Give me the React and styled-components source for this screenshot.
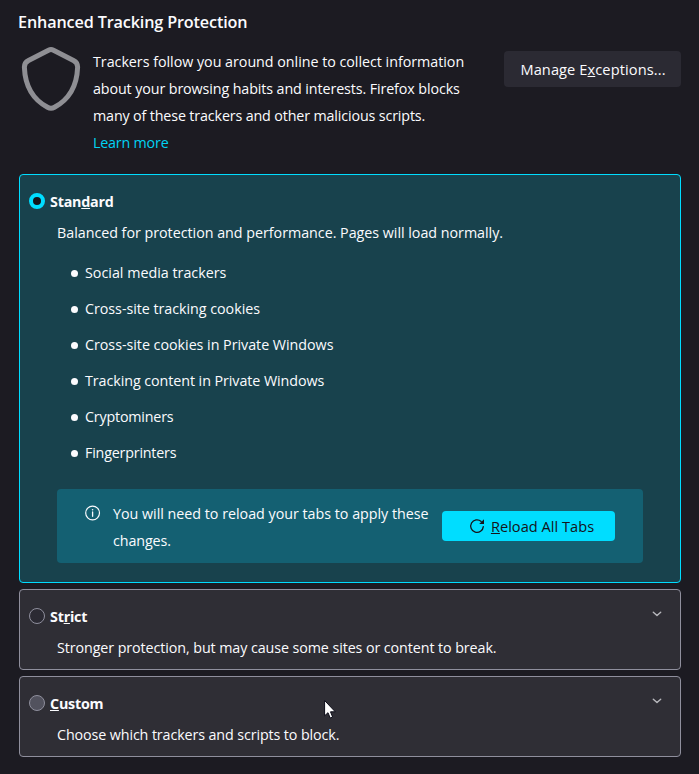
import React from "react";
import styled, { createGlobalStyle } from "styled-components";

const Global = createGlobalStyle`
  *, *::before, *::after { box-sizing: border-box; }
  body {
    margin: 0;
    background: #1c1b22;
    color: #fbfbfe;
    font: 400 14.3px/27px "Open Sans", "Segoe UI", sans-serif;
    overflow: hidden;
  }
`;

const Page = styled.main`
  position: relative;
  width: 699px;
  height: 774px;
  padding: 9px 18px 0 19px;
`;

const Heading = styled.h1`
  margin: 0 0 0 -1px;
  font-size: 16.2px;
  font-weight: 600;
  line-height: 27px;
  letter-spacing: -0.14px;
`;

const Intro = styled.section`
  display: flex;
  align-items: flex-start;
  height: 138px;
  padding-top: 12px;
`;

const Shield = styled.svg`
  flex: none;
  width: 64px;
  height: 66px;
  margin: -2px 10px 0 0;
`;

const IntroText = styled.div`
  flex: 1;
`;

const Line = styled.span`
  display: block;
  white-space: nowrap;
  letter-spacing: ${(p) => p.$track || 0}px;
`;

const Link = styled.a`
  color: #00ddff;
  letter-spacing: -0.2px;
  text-decoration: none;
  opacity: 0.95;
`;

const Key = styled.span`
  text-decoration: underline;
  text-decoration-thickness: 1px;
  text-underline-offset: 1px;
  text-decoration-skip-ink: none;
`;

const Button = styled.button`
  display: flex;
  align-items: center;
  justify-content: center;
  flex: none;
  border: 0;
  border-radius: 4px;
  padding: 0;
  font: 500 14.6px/27px "Open Sans", "Segoe UI", sans-serif;
  white-space: nowrap;
`;

const ManageButton = styled(Button)`
  width: 177px;
  height: 36px;
  margin-top: 3px;
  padding-left: 1px;
  background: #2b2a33;
  color: #fbfbfe;
  letter-spacing: 0.1px;
`;

const ReloadButton = styled(Button)`
  width: 173px;
  height: 30px;
  margin-top: 22px;
  gap: 6px;
  padding-left: 6px;
  background: #00ddff;
  color: #15141a;
  letter-spacing: 0.02px;
`;

const Options = styled.div`
  display: flex;
  flex-direction: column;
  gap: 6px;
`;

const Card = styled.section`
  display: flex;
  flex-direction: column;
  height: ${(p) => (p.$selected ? 409 : 81)}px;
  padding: 13px 19px 0 9px;
  border: 1px solid ${(p) => (p.$selected ? "#00ddff" : "#8f8f9d")};
  border-radius: 4px;
  background: ${(p) => (p.$selected ? "#18424d" : "#2f2e35")};
`;

const CardHeader = styled.div`
  display: flex;
  align-items: center;
  height: 27px;
`;

const Radio = styled.span`
  flex: none;
  width: 16px;
  height: 16px;
  margin: 0 5px 1px 0;
  border-radius: 50%;
  border: ${(p) => (p.$checked ? "4px solid #00ddff" : "1px solid #8f8f9d")};
  background: ${(p) => (p.$checked ? "#15141a" : p.$hover ? "#52525e" : "#2b2a33")};
`;

const CardTitle = styled.h2`
  flex: 1;
  margin: 0;
  font-size: 14.3px;
  font-weight: 700;
  line-height: 27px;
  letter-spacing: -0.22px;
`;

const Chevron = styled.svg`
  width: 10px;
  height: 6px;
  margin: -6px -1px 0 0;
`;

const Description = styled.p`
  margin: 4px 0 0 28px;
  white-space: nowrap;
  letter-spacing: ${(p) => p.$track || 0}px;
`;

const TrackerList = styled.ul`
  display: flex;
  flex-direction: column;
  gap: 9px;
  margin: 13px 0 23px 42px;
  padding: 0;
  list-style: none;
`;

const Tracker = styled.li`
  display: flex;
  align-items: center;
  gap: 7px;
  height: 27px;
  letter-spacing: ${(p) => p.$track || 0}px;

  &::before {
    content: "";
    width: 7px;
    height: 7px;
    margin-top: 1px;
    border-radius: 50%;
    background: #fbfbfe;
  }
`;

const Notice = styled.div`
  display: flex;
  align-items: flex-start;
  width: 586px;
  height: 74px;
  margin-left: 28px;
  padding-left: 28px;
  border-radius: 4px;
  background: #146072;
`;

const InfoSvg = styled.svg`
  flex: none;
  width: 16px;
  height: 16px;
  margin: 16px 12px 0 0;
`;

const NoticeText = styled.div`
  width: 329px;
  padding-top: 11px;
`;

const ReloadSvg = styled.svg`
  width: 16px;
  height: 16px;
`;

const Pointer = styled.svg`
  position: absolute;
  left: 324px;
  top: 699px;
  width: 12px;
  height: 20px;
`;

const trackers = [
  ["Social media trackers", 0],
  ["Cross-site tracking cookies", -0.04],
  ["Cross-site cookies in Private Windows", -0.03],
  ["Tracking content in Private Windows", -0.07],
  ["Cryptominers", -0.19],
  ["Fingerprinters", -0.2],
];

const ExpandIcon = () => (
  <Chevron viewBox="0 0 10 6" fill="none" stroke="#b8b8bd" strokeWidth="1.4" strokeLinecap="round" strokeLinejoin="round">
    <path d="M1.3 1.2 5 4.6 8.7 1.2" />
  </Chevron>
);

export default function App() {
  return (
    <>
      <Global />
      <Page>
        <Heading>Enhanced Tracking Protection</Heading>
        <Intro>
          <Shield viewBox="19 46 64 66" fill="none" stroke="#8f8f94" strokeWidth="5">
            <path d="M48.5 50.2Q51 48.9 53.5 50.2L73.5 60.5Q77.8 62.7 77.6 67.5C76.8 88 68 100 54.5 107.3Q51 109.2 47.5 107.3C34 100 25.2 88 24.4 67.5Q24.2 62.7 28.5 60.5Z" />
          </Shield>
          <IntroText>
            <Line $track={-0.03}>Trackers follow you around online to collect information</Line>
            <Line $track={-0.11}>about your browsing habits and interests. Firefox blocks</Line>
            <Line $track={-0.145}>many of these trackers and other malicious scripts.</Line>
            <Link>Learn more</Link>
          </IntroText>
          <ManageButton>
            <span>Manage E<Key>x</Key>ceptions...</span>
          </ManageButton>
        </Intro>

        <Options>
          <Card $selected>
            <CardHeader>
              <Radio $checked />
              <CardTitle>Stan<Key>d</Key>ard</CardTitle>
            </CardHeader>
            <Description $track={-0.025}>Balanced for protection and performance. Pages will load normally.</Description>
            <TrackerList>
              {trackers.map(([name, track]) => (
                <Tracker key={name} $track={track}>{name}</Tracker>
              ))}
            </TrackerList>
            <Notice>
              <InfoSvg viewBox="0 0 16 16" fill="none" stroke="#fbfbfe">
                <circle cx="7.6" cy="8" r="6.9" strokeWidth="1.2" />
                <path d="M7.6 7v4.3" strokeWidth="1.3" strokeLinecap="round" />
                <circle cx="7.6" cy="4.7" r=".8" fill="#fbfbfe" stroke="none" />
              </InfoSvg>
              <NoticeText>
                <Line $track={-0.015}>You will need to reload your tabs to apply these</Line>
                <Line $track={-0.1}>changes.</Line>
              </NoticeText>
              <ReloadButton>
                <ReloadSvg viewBox="0 0 16 16" fill="none" stroke="#15141a" strokeWidth="1.3">
                  <path d="M12.2 3.4A6.3 6.3 0 1 0 14.3 8.6" strokeLinecap="round" />
                  <path d="M15 1.2V6H10.2Z" fill="#15141a" stroke="none" />
                </ReloadSvg>
                <span><Key>R</Key>eload All Tabs</span>
              </ReloadButton>
            </Notice>
          </Card>

          <Card>
            <CardHeader>
              <Radio />
              <CardTitle>St<Key>r</Key>ict</CardTitle>
              <ExpandIcon />
            </CardHeader>
            <Description $track={-0.09}>Stronger protection, but may cause some sites or content to break.</Description>
          </Card>

          <Card>
            <CardHeader>
              <Radio $hover />
              <CardTitle><Key>C</Key>ustom</CardTitle>
              <ExpandIcon />
            </CardHeader>
            <Description $track={-0.11}>Choose which trackers and scripts to block.</Description>
          </Card>
        </Options>

        <Pointer viewBox="0 0 12 20">
          <path d="M.6 1.5V16.8L4 13.7 6.2 19 8.6 18 6.5 12.8H11.3Z" fill="#fff" stroke="#0c0c18" strokeWidth="1" />
        </Pointer>
      </Page>
    </>
  );
}
